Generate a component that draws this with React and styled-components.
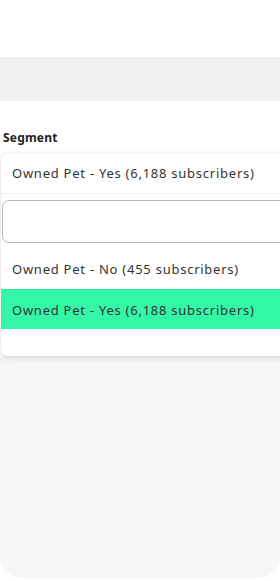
import React from "react";
import styled, { createGlobalStyle } from "styled-components";

const Global = createGlobalStyle`
  html, body { margin: 0; padding: 0; background: #fff; }
  body { font-family: "Noto Sans", "Open Sans", sans-serif; color: #333; }
  * { box-sizing: border-box; }
`;

const Page = styled.div`
  width: 280px;
  height: 581px;
  display: flex;
  flex-direction: column;
  overflow: hidden;
  background: #fff;
`;

const TopSpace = styled.div`
  height: 57px;
`;

const Band = styled.div`
  height: 44px;
  background: #f0f0f0;
`;

const Section = styled.div`
  padding: 29px 0 0 0;
  display: flex;
  flex-direction: column;
`;

const Label = styled.div`
  font-size: 12px;
  font-weight: 700;
  color: #222;
  padding-left: 3px;
  height: 16px;
  line-height: 16px;
  letter-spacing: 0.2px;
  margin-bottom: 7px;
`;

const Card = styled.div`
  width: 300px;
  margin-left: 1px;
  background: #fff;
  border-radius: 6px;
  box-shadow: 0 0 1px rgba(0,0,0,0.15), 0 2px 6px rgba(0,0,0,0.12);
  position: relative;
  z-index: 1;
  padding-bottom: 27px;
`;

const Value = styled.div`
  height: 41px;
  display: flex;
  align-items: center;
  padding-left: 11px;
  font-size: 13px;
  letter-spacing: 0.75px;
  border-bottom: 1px solid #f0f0f0;
`;

const Search = styled.div`
  margin: 6px 0 0 1px;
  height: 43px;
  border: 1px solid #b8b8b8;
  border-radius: 7px;
  background: #fff;
`;

const Options = styled.div`
  margin-top: 6px;
  display: flex;
  flex-direction: column;
`;

const Option = styled.div`
  height: 40px;
  display: flex;
  align-items: center;
  padding-left: 11px;
  font-size: 13px;
  letter-spacing: 0.75px;
  background: ${p => (p.$active ? "#33f7a7" : "transparent")};
  border-top: ${p => (p.$active ? "1px solid #2ee89c" : "none")};
`;

const Bottom = styled.div`
  flex: 1;
  margin-bottom: 3px;
  background: #f6f6f6;
  border-radius: 0 0 22px 22px;
`;

export default function App() {
  return (
    <>
      <Global />
      <Page>
        <TopSpace />
        <Band />
        <Section>
          <Label>Segment</Label>
          <Card>
            <Value>Owned Pet - Yes (6,188 subscribers)</Value>
            <Search />
            <Options>
              <Option>Owned Pet - No (455 subscribers)</Option>
              <Option $active>Owned Pet - Yes (6,188 subscribers)</Option>
            </Options>
          </Card>
        </Section>
        <Bottom />
      </Page>
    </>
  );
}
